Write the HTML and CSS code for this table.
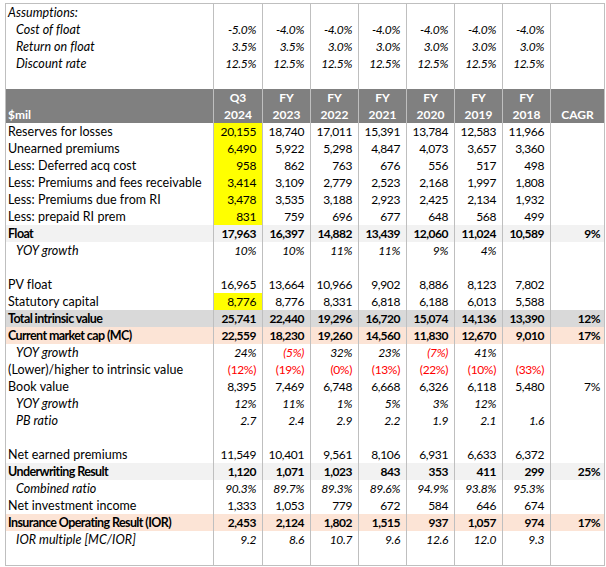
FILE: index.html
```html
<!DOCTYPE html>
<html>
<head>
<meta charset="utf-8">
<link rel="stylesheet" href="styles.css">
</head>
<body>
<table class="sheet">
  <tbody>
    <tr class="it"><td class="lbl c1">Assumptions:</td><td class="c2"></td><td class="c3"></td><td class="c3"></td><td class="c3"></td><td class="c3"></td><td class="c3"></td><td class="c3"></td><td class="c9"></td></tr>
    <tr class="it"><td class="lbl ind">Cost of float</td><td>-5.0%</td><td>-4.0%</td><td>-4.0%</td><td>-4.0%</td><td>-4.0%</td><td>-4.0%</td><td>-4.0%</td><td></td></tr>
    <tr class="it"><td class="lbl ind">Return on float</td><td>3.5%</td><td>3.5%</td><td>3.0%</td><td>3.0%</td><td>3.0%</td><td>3.0%</td><td>3.0%</td><td></td></tr>
    <tr class="it"><td class="lbl ind">Discount rate</td><td>12.5%</td><td>12.5%</td><td>12.5%</td><td>12.5%</td><td>12.5%</td><td>12.5%</td><td>12.5%</td><td></td></tr>
    <tr><td class="lbl"></td><td></td><td></td><td></td><td></td><td></td><td></td><td></td><td></td></tr>
    <tr class="hd"><td class="lbl"></td><td>Q3</td><td>FY</td><td>FY</td><td>FY</td><td>FY</td><td>FY</td><td>FY</td><td></td></tr>
    <tr class="hd"><td class="lbl">$mil</td><td>2024</td><td>2023</td><td>2022</td><td>2021</td><td>2020</td><td>2019</td><td>2018</td><td>CAGR</td></tr>
    <tr><td class="lbl">Reserves for losses</td><td class="y">20,155</td><td>18,740</td><td>17,011</td><td>15,391</td><td>13,784</td><td>12,583</td><td>11,966</td><td></td></tr>
    <tr><td class="lbl">Unearned premiums</td><td class="y">6,490</td><td>5,922</td><td>5,298</td><td>4,847</td><td>4,073</td><td>3,657</td><td>3,360</td><td></td></tr>
    <tr><td class="lbl">Less: Deferred acq cost</td><td class="y">958</td><td>862</td><td>763</td><td>676</td><td>556</td><td>517</td><td>498</td><td></td></tr>
    <tr><td class="lbl">Less: Premiums and fees receivable</td><td class="y">3,414</td><td>3,109</td><td>2,779</td><td>2,523</td><td>2,168</td><td>1,997</td><td>1,808</td><td></td></tr>
    <tr><td class="lbl">Less: Premiums due from RI</td><td class="y">3,478</td><td>3,535</td><td>3,188</td><td>2,923</td><td>2,425</td><td>2,134</td><td>1,932</td><td></td></tr>
    <tr><td class="lbl">Less: prepaid RI prem</td><td class="y">831</td><td>759</td><td>696</td><td>677</td><td>648</td><td>568</td><td>499</td><td></td></tr>
    <tr class="b lg"><td class="lbl">Float</td><td>17,963</td><td>16,397</td><td>14,882</td><td>13,439</td><td>12,060</td><td>11,024</td><td>10,589</td><td>9%</td></tr>
    <tr class="it"><td class="lbl ind">YOY growth</td><td>10%</td><td>10%</td><td>11%</td><td>11%</td><td>9%</td><td>4%</td><td></td><td></td></tr>
    <tr><td class="lbl"></td><td></td><td></td><td></td><td></td><td></td><td></td><td></td><td></td></tr>
    <tr><td class="lbl">PV float</td><td>16,965</td><td>13,664</td><td>10,966</td><td>9,902</td><td>8,886</td><td>8,123</td><td>7,802</td><td></td></tr>
    <tr><td class="lbl">Statutory capital</td><td class="y">8,776</td><td>8,776</td><td>8,331</td><td>6,818</td><td>6,188</td><td>6,013</td><td>5,588</td><td></td></tr>
    <tr class="b mg"><td class="lbl">Total intrinsic value</td><td>25,741</td><td>22,440</td><td>19,296</td><td>16,720</td><td>15,074</td><td>14,136</td><td>13,390</td><td>12%</td></tr>
    <tr class="b pe"><td class="lbl">Current market cap (MC)</td><td>22,559</td><td>18,230</td><td>19,260</td><td>14,560</td><td>11,830</td><td>12,670</td><td>9,010</td><td>17%</td></tr>
    <tr class="it"><td class="lbl ind">YOY growth</td><td>24%</td><td class="red">(5%)</td><td>32%</td><td>23%</td><td class="red">(7%)</td><td>41%</td><td></td><td></td></tr>
    <tr class="red"><td class="lbl blk">(Lower)/higher to intrinsic value</td><td>(12%)</td><td>(19%)</td><td>(0%)</td><td>(13%)</td><td>(22%)</td><td>(10%)</td><td>(33%)</td><td></td></tr>
    <tr><td class="lbl">Book value</td><td>8,395</td><td>7,469</td><td>6,748</td><td>6,668</td><td>6,326</td><td>6,118</td><td>5,480</td><td>7%</td></tr>
    <tr class="it"><td class="lbl ind">YOY growth</td><td>12%</td><td>11%</td><td>1%</td><td>5%</td><td>3%</td><td>12%</td><td></td><td></td></tr>
    <tr class="it"><td class="lbl ind">PB ratio</td><td>2.7</td><td>2.4</td><td>2.9</td><td>2.2</td><td>1.9</td><td>2.1</td><td>1.6</td><td></td></tr>
    <tr><td class="lbl"></td><td></td><td></td><td></td><td></td><td></td><td></td><td></td><td></td></tr>
    <tr><td class="lbl">Net earned premiums</td><td>11,549</td><td>10,401</td><td>9,561</td><td>8,106</td><td>6,931</td><td>6,633</td><td>6,372</td><td></td></tr>
    <tr class="b lg"><td class="lbl">Underwriting Result</td><td>1,120</td><td>1,071</td><td>1,023</td><td>843</td><td>353</td><td>411</td><td>299</td><td>25%</td></tr>
    <tr class="it"><td class="lbl ind">Combined ratio</td><td>90.3%</td><td>89.7%</td><td>89.3%</td><td>89.6%</td><td>94.9%</td><td>93.8%</td><td>95.3%</td><td></td></tr>
    <tr><td class="lbl">Net investment income</td><td>1,333</td><td>1,053</td><td>779</td><td>672</td><td>584</td><td>646</td><td>674</td><td></td></tr>
    <tr class="b pe"><td class="lbl">Insurance Operating Result (IOR)</td><td>2,453</td><td>2,124</td><td>1,802</td><td>1,515</td><td>937</td><td>1,057</td><td>974</td><td>17%</td></tr>
    <tr class="it"><td class="lbl ind">IOR multiple [MC/IOR]</td><td>9.2</td><td>8.6</td><td>10.7</td><td>9.6</td><td>12.6</td><td>12.0</td><td>9.3</td><td></td></tr>
    <tr><td class="lbl"></td><td></td><td></td><td></td><td></td><td></td><td></td><td></td><td></td></tr>
  </tbody>
</table>
</body>
</html>
```
FILE: styles.css
```css
html, body {
  margin: 0;
  background: #ffffff;
}
body {
  padding: 3px 0 0 5px;
  font-family: "Lato", "Liberation Sans", sans-serif;
  font-size: 12px;
  color: #000000;
}
.sheet {
  border-collapse: separate;
  border-spacing: 0;
  table-layout: fixed;
  width: 600px;
  border: 1px solid #bfbfbf;
}
.sheet td {
  box-sizing: border-box;
  height: 17px;
  padding: 1px 6px 0 2px;
  line-height: 16px;
  white-space: nowrap;
  overflow: hidden;
  text-align: right;
  vertical-align: bottom;
  letter-spacing: -0.35px;
  border-right: 1px solid #bfbfbf;
}
.sheet td:last-child {
  border-right: none;
  padding-right: 4px;
}
.c1 { width: 208px; }
.c2 { width: 49px; }
.c3 { width: 48px; }
.c9 { width: 53px; }
.sheet td.lbl {
  text-align: left;
  padding-left: 2px;
  font-size: 12.5px;
  letter-spacing: 0.05px;
}
.sheet td.ind {
  padding-left: 10px;
}
.it td { font-style: italic; }
.b td {
  font-weight: bold;
  letter-spacing: -0.5px;
}
.sheet .b td.lbl {
  font-size: 12.5px;
  letter-spacing: -0.6px;
}
.lg td { background: #f2f2f2; }
.mg td { background: #d9d9d9; }
.pe td { background: #fce4d6; }
.sheet td.y { background: #ffff00; }
.red, .sheet td.red { color: #ff0000; }
.red td.blk { color: #000000; }
.hd td {
  background: #808080;
  color: #ffffff;
  font-weight: bold;
  text-align: center;
  padding-left: 0;
  padding-right: 0;
  letter-spacing: 0;
  border-right-color: #bfbfbf;
}
.hd td:last-child { padding-right: 0; }
.sheet .hd td.lbl { padding-left: 2px; font-size: 12px; letter-spacing: 0; }
```
